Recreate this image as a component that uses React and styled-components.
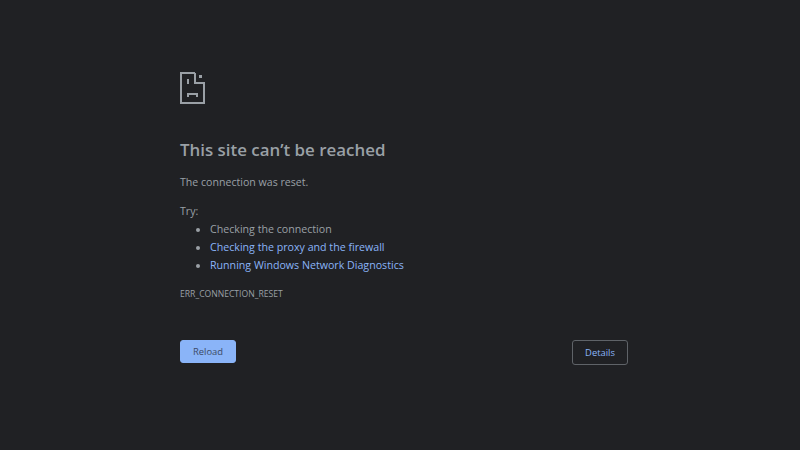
import styled, { createGlobalStyle } from "styled-components";

const GlobalStyle = createGlobalStyle`
  html, body {
    margin: 0;
    padding: 0;
    background: #202124;
  }
  body {
    font-family: "Open Sans", "Noto Sans", sans-serif;
  }
`;

const Page = styled.div`
  width: 800px;
  height: 450px;
  box-sizing: border-box;
  padding: 72px 172px 0 180px;
  background: #202124;
  overflow: hidden;
`;

const Icon = styled.svg`
  display: block;
  width: 26px;
  height: 32px;
  color: #9aa0a6;
`;

const Title = styled.h1`
  margin: 34px 0 0;
  font-size: 16.9px;
  line-height: 24px;
  font-weight: 600;
  color: #9aa0a6;
`;

const Message = styled.p`
  margin: 11px 0 0;
  font-size: 10.6px;
  line-height: 18px;
  color: #9aa0a6;
`;

const Try = styled.div`
  margin-top: 11px;
  font-size: 10.6px;
  line-height: 18px;
  color: #9aa0a6;
`;

const Suggestions = styled.ul`
  margin: 0;
  padding: 0 0 0 30px;
  font-size: 10.65px;
  line-height: 18px;
  color: #9aa0a6;
`;

const Suggestion = styled.li`
  color: ${(p) => (p.$link ? "#8ab4f8" : "#9aa0a6")};
  &::marker {
    color: #9aa0a6;
  }
`;

const Code = styled.div`
  margin-top: 13px;
  font-size: 8.6px;
  line-height: 14px;
  color: #9aa0a6;
`;

const Actions = styled.div`
  margin-top: 39px;
  display: flex;
  justify-content: space-between;
  align-items: flex-start;
`;

const Button = styled.button`
  box-sizing: border-box;
  height: ${(p) => (p.$outline ? "25px" : "23px")};
  width: 56px;
  padding: 0;
  border-radius: 3px;
  border: 1px solid ${(p) => (p.$outline ? "#5f6368" : "#8ab4f8")};
  background: ${(p) => (p.$outline ? "#202124" : "#8ab4f8")};
  color: ${(p) => (p.$outline ? "#8ab4f8" : "#3c4a66")};
  font-family: inherit;
  font-size: 9.4px;
  font-weight: 500;
`;

export default function App() {
  return (
    <Page>
      <GlobalStyle />
      <Icon viewBox="0 0 26 32" fill="none" stroke="currentColor" strokeWidth="2">
        <path d="M15 1H1v30h23V11" />
        <path d="M15 1v10h10" />
        <path d="M19 3h3v3h-3z" fill="currentColor" strokeWidth="0" />
        <path d="M8 7v5" />
        <path d="M8 25v-3h9v3" />
      </Icon>
      <Title>This site can’t be reached</Title>
      <Message>The connection was reset.</Message>
      <Try>Try:</Try>
      <Suggestions>
        <Suggestion>Checking the connection</Suggestion>
        <Suggestion $link>Checking the proxy and the firewall</Suggestion>
        <Suggestion $link>Running Windows Network Diagnostics</Suggestion>
      </Suggestions>
      <Code>ERR_CONNECTION_RESET</Code>
      <Actions>
        <Button>Reload</Button>
        <Button $outline>Details</Button>
      </Actions>
    </Page>
  );
}
